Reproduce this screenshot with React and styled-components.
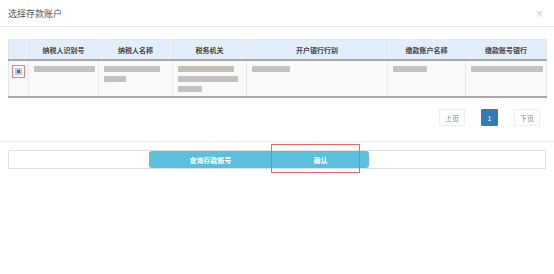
import styled, { createGlobalStyle } from 'styled-components';

const GlobalStyle = createGlobalStyle`
  body {
    margin: 0;
    background: #fff;
    font-family: "Noto Sans CJK SC", "Liberation Sans", sans-serif;
  }
`;

const Modal = styled.div`
  width: 554px;
  height: 274px;
  background: #fff;
`;

const Header = styled.div`
  display: flex;
  justify-content: space-between;
  align-items: center;
  height: 27px;
  padding: 0 8px;
  border-bottom: 1px solid #e8e8e8;
  box-sizing: border-box;
`;

const Title = styled.div`
  font-size: 9px;
  color: #555;
`;

const Close = styled.span`
  font-size: 9px;
  color: #bbb;
  margin-right: 2px;
`;

const Body = styled.div`
  padding: 12px 8px 0;
`;

const Table = styled.table`
  width: 538px;
  border-collapse: collapse;
  border-left: 1px solid #e4e4e4;
  table-layout: fixed;
  font-size: 7px;
`;

const Th = styled.th`
  height: 19px;
  background: #e2effb;
  border-right: 1px solid #e8e8e8;
  border-top: 1px solid #e8e8e8;
  border-bottom: 2px solid #a9a9a9;
  color: #444;
  font-weight: bold;
  padding: 0;
`;

const Td = styled.td`
  height: 37px;
  background: #f9f9f9;
  border-right: 1px solid #e8e8e8;
  border-bottom: 2px solid #a9a9a9;
  vertical-align: top;
  padding: 5px 5px 0;
  box-sizing: border-box;
`;

const Blur = styled.div`
  height: ${(p) => p.h || 6}px;
  width: ${(p) => p.w}px;
  background: ${(p) => p.c || '#c2c2c2'};
  margin-bottom: 4px;
  border-radius: 1px;
`;

const CheckWrap = styled.div`
  width: 11px;
  height: 11px;
  border: 1px solid #f08080;
  display: flex;
  align-items: center;
  justify-content: center;
  margin: -1px 0 0 -2px;
`;

const Check = styled.div`
  width: 7px;
  height: 7px;
  background: #b9cbe8;
  display: flex;
  align-items: center;
  justify-content: center;
  &::after {
    content: '';
    width: 3px;
    height: 3px;
    background: #666;
  }
`;

const Pager = styled.div`
  display: flex;
  justify-content: flex-end;
  gap: 16px;
  padding: 11px 6px 0 0;
  height: 27px;
  box-sizing: border-box;
`;

const PageBtn = styled.div`
  height: 17px;
  min-width: ${(p) => (p.active ? 17 : 26)}px;
  box-sizing: border-box;
  border: 1px solid ${(p) => (p.active ? '#337ab7' : '#eee')};
  background: ${(p) => (p.active ? '#337ab7' : '#fff')};
  color: ${(p) => (p.active ? '#fff' : '#888')};
  font-size: 7px;
  display: flex;
  align-items: center;
  justify-content: center;
  border-radius: 1px;
`;

const Divider = styled.div`
  margin-top: 16px;
  border-top: 1px solid #eee;
`;

const Footer = styled.div`
  margin: 8px 8px 0;
  height: 19px;
  border: 1px solid #e0e0e0;
  box-sizing: border-box;
  display: flex;
  justify-content: center;
  padding-right: 36px;
  position: relative;
`;

const Btn = styled.div`
  width: ${(p) => p.w}px;
  height: 17px;
  background: #5bc0de;
  color: #fff;
  font-size: 7px;
  font-weight: bold;
  display: flex;
  align-items: center;
  justify-content: center;
  border-radius: ${(p) => p.r};
  position: relative;
`;

const Highlight = styled.div`
  position: absolute;
  left: -1px;
  top: -7px;
  width: 89px;
  height: 29px;
  border: 1px solid #e06a6a;
  box-sizing: border-box;
`;

const cols = [20, 70, 74, 74, 141, 78, 81];
const heads = ['', '纳税人识别号', '纳税人名称', '税务机关', '开户银行行别', '缴款账户名称', '缴款账号银行'];

export default function App() {
  return (
    <Modal>
      <GlobalStyle />
      <Header>
        <Title>选择存款账户</Title>
        <Close>×</Close>
      </Header>
      <Body>
        <Table>
          <colgroup>
            {cols.map((w, i) => (
              <col key={i} style={{ width: w }} />
            ))}
          </colgroup>
          <thead>
            <tr>
              {heads.map((h, i) => (
                <Th key={i}>{h}</Th>
              ))}
            </tr>
          </thead>
          <tbody>
            <tr>
              <Td>
                <CheckWrap>
                  <Check />
                </CheckWrap>
              </Td>
              <Td>
                <Blur w={61} />
              </Td>
              <Td>
                <Blur w={56} />
                <Blur w={22} />
              </Td>
              <Td>
                <Blur w={56} c="#c4c0b8" />
                <Blur w={60} />
                <Blur w={24} />
              </Td>
              <Td>
                <Blur w={38} />
              </Td>
              <Td>
                <Blur w={34} />
              </Td>
              <Td>
                <Blur w={72} />
              </Td>
            </tr>
          </tbody>
        </Table>
        <Pager>
          <PageBtn>上页</PageBtn>
          <PageBtn active>1</PageBtn>
          <PageBtn>下页</PageBtn>
        </Pager>
      </Body>
      <Divider />
      <Footer>
        <Btn w={123} r="3px 0 0 3px">查询存款账号</Btn>
        <Btn w={97} r="0 3px 3px 0">
          确认
          <Highlight />
        </Btn>
      </Footer>
    </Modal>
  );
}
